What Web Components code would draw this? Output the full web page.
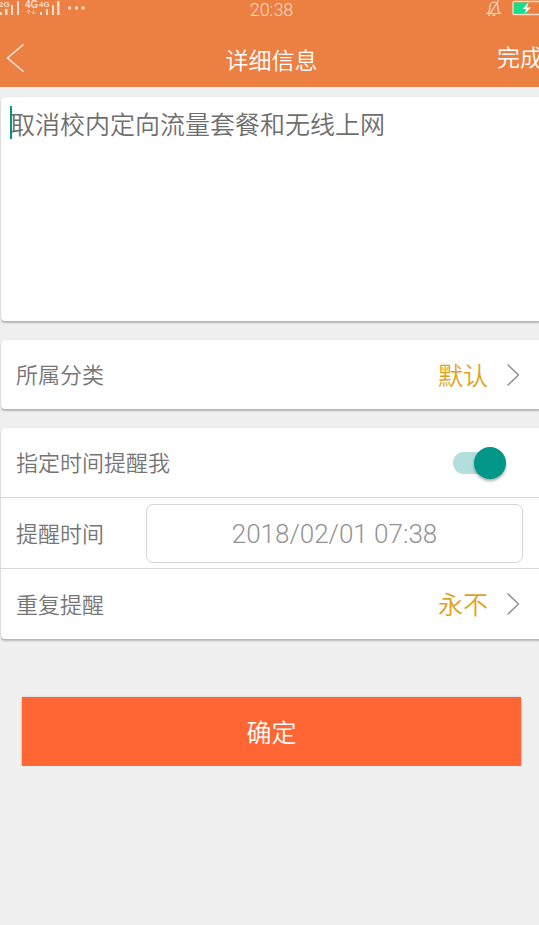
<!DOCTYPE html>
<html lang="zh-CN">
<head>
<meta charset="utf-8">
<meta name="viewport" content="width=device-width, initial-scale=1">
<title>详细信息</title>
<style>
html, body { margin: 0; min-height: 100%; background: #f0f0f0; overflow-x: hidden; }
body { font-family: Roboto, "Noto Sans CJK SC", sans-serif; font-weight: 350; color: #757575; }
</style>
</head>
<body>
<reminder-page></reminder-page>
<script>
const define = (name, html, setup) => customElements.define(name, class extends HTMLElement {
  connectedCallback() {
    if (this.shadowRoot) return;
    const t = document.createElement('template');
    t.innerHTML = html;
    this.attachShadow({ mode: 'open' }).append(t.content.cloneNode(true));
    if (setup) setup(this, this.shadowRoot);
  }
});

define('status-bar', `
<style>
:host { display: grid; grid-template-columns: 1fr auto 1fr; height: 20px; color: #fbdcc8; }
svg { display: block; }
.time { font-size: 18px; line-height: 20px; font-weight: 300; }
.right { justify-self: end; }
text { font-family: "Liberation Sans", sans-serif; font-weight: 700; fill: #fbdcc8; }
</style>
<svg width="90" height="20" viewBox="0 0 90 20" role="img" aria-label="信号">
  <text x="-1" y="7" font-size="8">2G</text>
  <text x="25" y="8" font-size="10">4G</text>
  <text x="39" y="7" font-size="8">4G</text>
  <path fill="#fbdcc8" d="M0 12h2v3H0zM5 9h2.500v6H5zM11 5h2v10h-2zM17 1h2v14h-2zM40 12h2v3h-2zM46 9h2v6h-2zM52 5h2v10h-2zM57 1h2.500v14h-2.500z"/>
  <path fill="none" stroke="#f7c3a3" d="M28.500 14V9.500M26.500 12l2-2 2 2M33.500 9.500v4.500M31.500 12l2 2 2-2"/>
  <g fill="#fbdcc8"><circle cx="69.500" cy="8" r="1.700"/><circle cx="76.500" cy="8" r="1.700"/><circle cx="83" cy="8" r="1.700"/></g>
</svg>
<span class="time">20:38</span>
<svg class="right" width="58" height="20" viewBox="485 0 58 20" role="img" aria-label="静音，充电中">
  <g fill="none" stroke="#fbdcc8" stroke-width="1.200">
    <path d="M487.500 13.500h12.500c-1.800-1.500-2-2.500-2-6 0-3-1.500-5.500-4-5.500s-4.200 2.500-4.200 5.500c0 3.500-.3 4.500-2.300 6zM492.500 14.500c.5 1.300 2.500 1.300 3 0M498.500.5L488.500 16"/>
  </g>
  <rect x="513" y="1.500" width="29" height="13" rx="1" fill="none" stroke="#fbdcc8" stroke-width="1.300"/>
  <path fill="#14e08c" d="M514 2.500h13v11h-13z"/>
  <path fill="#fff" d="M528.500 2.500l-6 6.500h3.500l-1.500 5 6.500-6.500h-4z"/>
</svg>`);

define('title-bar', `
<style>
:host { display: grid; grid-template-columns: 1fr auto 1fr; align-items: center; height: 67px; color: #fff; }
button { border: 0; padding: 0; background: none; color: inherit; font: inherit; cursor: pointer; }
.back { justify-self: start; padding: 9px 6px 0; }
svg { display: block; }
h1 { margin: 0; font-size: 23px; line-height: 34px; font-weight: inherit; padding-top: 16px; }
.done { justify-self: end; font-size: 23px; line-height: 34px; white-space: nowrap; padding-top: 10px; }
</style>
<button class="back" aria-label="返回"><svg width="18" height="28" viewBox="0 0 18 28" fill="none" stroke="#fde8dc" stroke-width="1.500"><path d="M17.500 .5L1.500 14l16 13.500"/></svg></button>
<h1><slot></slot></h1>
<button class="done"><slot name="action"></slot></button>`);

define('app-card', `
<style>
:host { display: block; margin-left: 1px; background: #fff; border-radius: 4px; box-shadow: 0 2px 2px rgba(0,0,0,.24), 0 0 1px rgba(0,0,0,.2); }
</style><slot></slot>`);

define('note-editor', `
<style>
:host { display: block; position: relative; height: 224px; }
textarea { display: block; box-sizing: border-box; width: 100%; height: 100%; border: 0; outline: 0; resize: none; margin: 0;
  padding: 10px 9px; background: none; color: #6e6e6e; font: inherit; font-size: 25px; line-height: 38px; caret-color: #009688; }
i { position: absolute; left: 9px; top: 9px; width: 2px; height: 33px; background: #009688; }
</style>
<textarea aria-label="提醒内容"></textarea><i></i>`,
(el, root) => { root.querySelector('textarea').value = el.getAttribute('value'); });

define('form-row', `
<style>
:host { display: flex; align-items: center; box-sizing: border-box; height: 69px; padding: 0 20px 0 15px; font-size: 22px; line-height: 32px; }
:host([divided]) { height: 71px; border-top: 1px solid #d8d8d8; }
::slotted([slot="label"]) { padding-top: 3px; }
</style>
<slot name="label"></slot><slot></slot>`);

define('picker-link', `
<style>
:host { display: block; margin-left: auto; }
button { display: flex; align-items: center; gap: 19px; border: 0; padding: 0 2px 0 0; background: none; color: #dea31c; font: inherit; font-size: 25px; line-height: 36px; cursor: pointer; }
span { padding-top: 4px; }
svg { display: block; }
</style>
<button><span><slot></slot></span><svg width="14" height="24" viewBox="0 0 14 24" fill="none" stroke="#8c8c8c" stroke-width="1.300"><path d="M.5 1.500L11.500 12l-11 10.500"/></svg></button>`,
(el, root) => root.querySelector('button').setAttribute('aria-label', el.getAttribute('label') + ' ' + el.textContent));

define('toggle-switch', `
<style>
:host { display: block; margin-left: auto; padding-right: 17px; }
input { appearance: none; isolation: isolate; display: grid; align-items: center; width: 53px; height: 32px; margin: 0; cursor: pointer; }
input::before { content: ""; grid-area: 1 / 1; width: 32px; height: 32px; border-radius: 50%; background: #fafafa; box-shadow: 0 2px 3px rgba(0,0,0,.35); }
input:checked::before { margin-left: auto; background: #009688; }
input::after { content: ""; grid-area: 1 / 1; width: 46px; height: 22px; border-radius: 11px; background: #b2dfdb; z-index: -1; }
</style>
<input type="checkbox" role="switch" checked>`,
(el, root) => root.querySelector('input').setAttribute('aria-label', el.getAttribute('label')));

define('date-field', `
<style>
:host { display: block; flex: 1; margin-left: 42px; }
input { display: block; box-sizing: border-box; width: 100%; height: 59px; border: 1px solid #d4d4d4; border-radius: 7px; background: #fff;
  margin: 0; padding: 2px 0 0; text-align: center; color: #939393; font: inherit; font-size: 26px; outline: 0; }
</style>
<input type="text">`,
(el, root) => { const i = root.querySelector('input'); i.value = el.getAttribute('value'); i.setAttribute('aria-label', el.getAttribute('label')); });

define('confirm-button', `
<style>
:host { display: block; margin: 58px 22px 0; }
button { display: block; width: 100%; height: 69px; border: 0; padding: 4px 0 0; background: #ff6633; color: #fff; font: inherit; font-size: 25px; line-height: 36px;
  box-shadow: 0 3px 2px rgba(0,0,0,.2), 0 0 2px rgba(0,0,0,.2); cursor: pointer; }
</style>
<button><slot></slot></button>`);

define('reminder-page', `
<style>
:host { display: block; width: calc(100% + 4px); }
header { background: #ec7f42; margin-bottom: 10px; }
main { display: flex; flex-direction: column; gap: 19px; }
</style>
<header>
  <status-bar></status-bar>
  <title-bar>详细信息<span slot="action">完成</span></title-bar>
</header>
<main>
  <app-card><note-editor value="取消校内定向流量套餐和无线上网"></note-editor></app-card>
  <app-card><form-row><span slot="label">所属分类</span><picker-link label="所属分类">默认</picker-link></form-row></app-card>
  <app-card>
    <form-row><span slot="label">指定时间提醒我</span><toggle-switch label="指定时间提醒我"></toggle-switch></form-row>
    <form-row divided><span slot="label">提醒时间</span><date-field label="提醒时间" value="2018/02/01 07:38"></date-field></form-row>
    <form-row divided><span slot="label">重复提醒</span><picker-link label="重复提醒">永不</picker-link></form-row>
  </app-card>
</main>
<confirm-button>确定</confirm-button>`);
</script>
</body>
</html>
